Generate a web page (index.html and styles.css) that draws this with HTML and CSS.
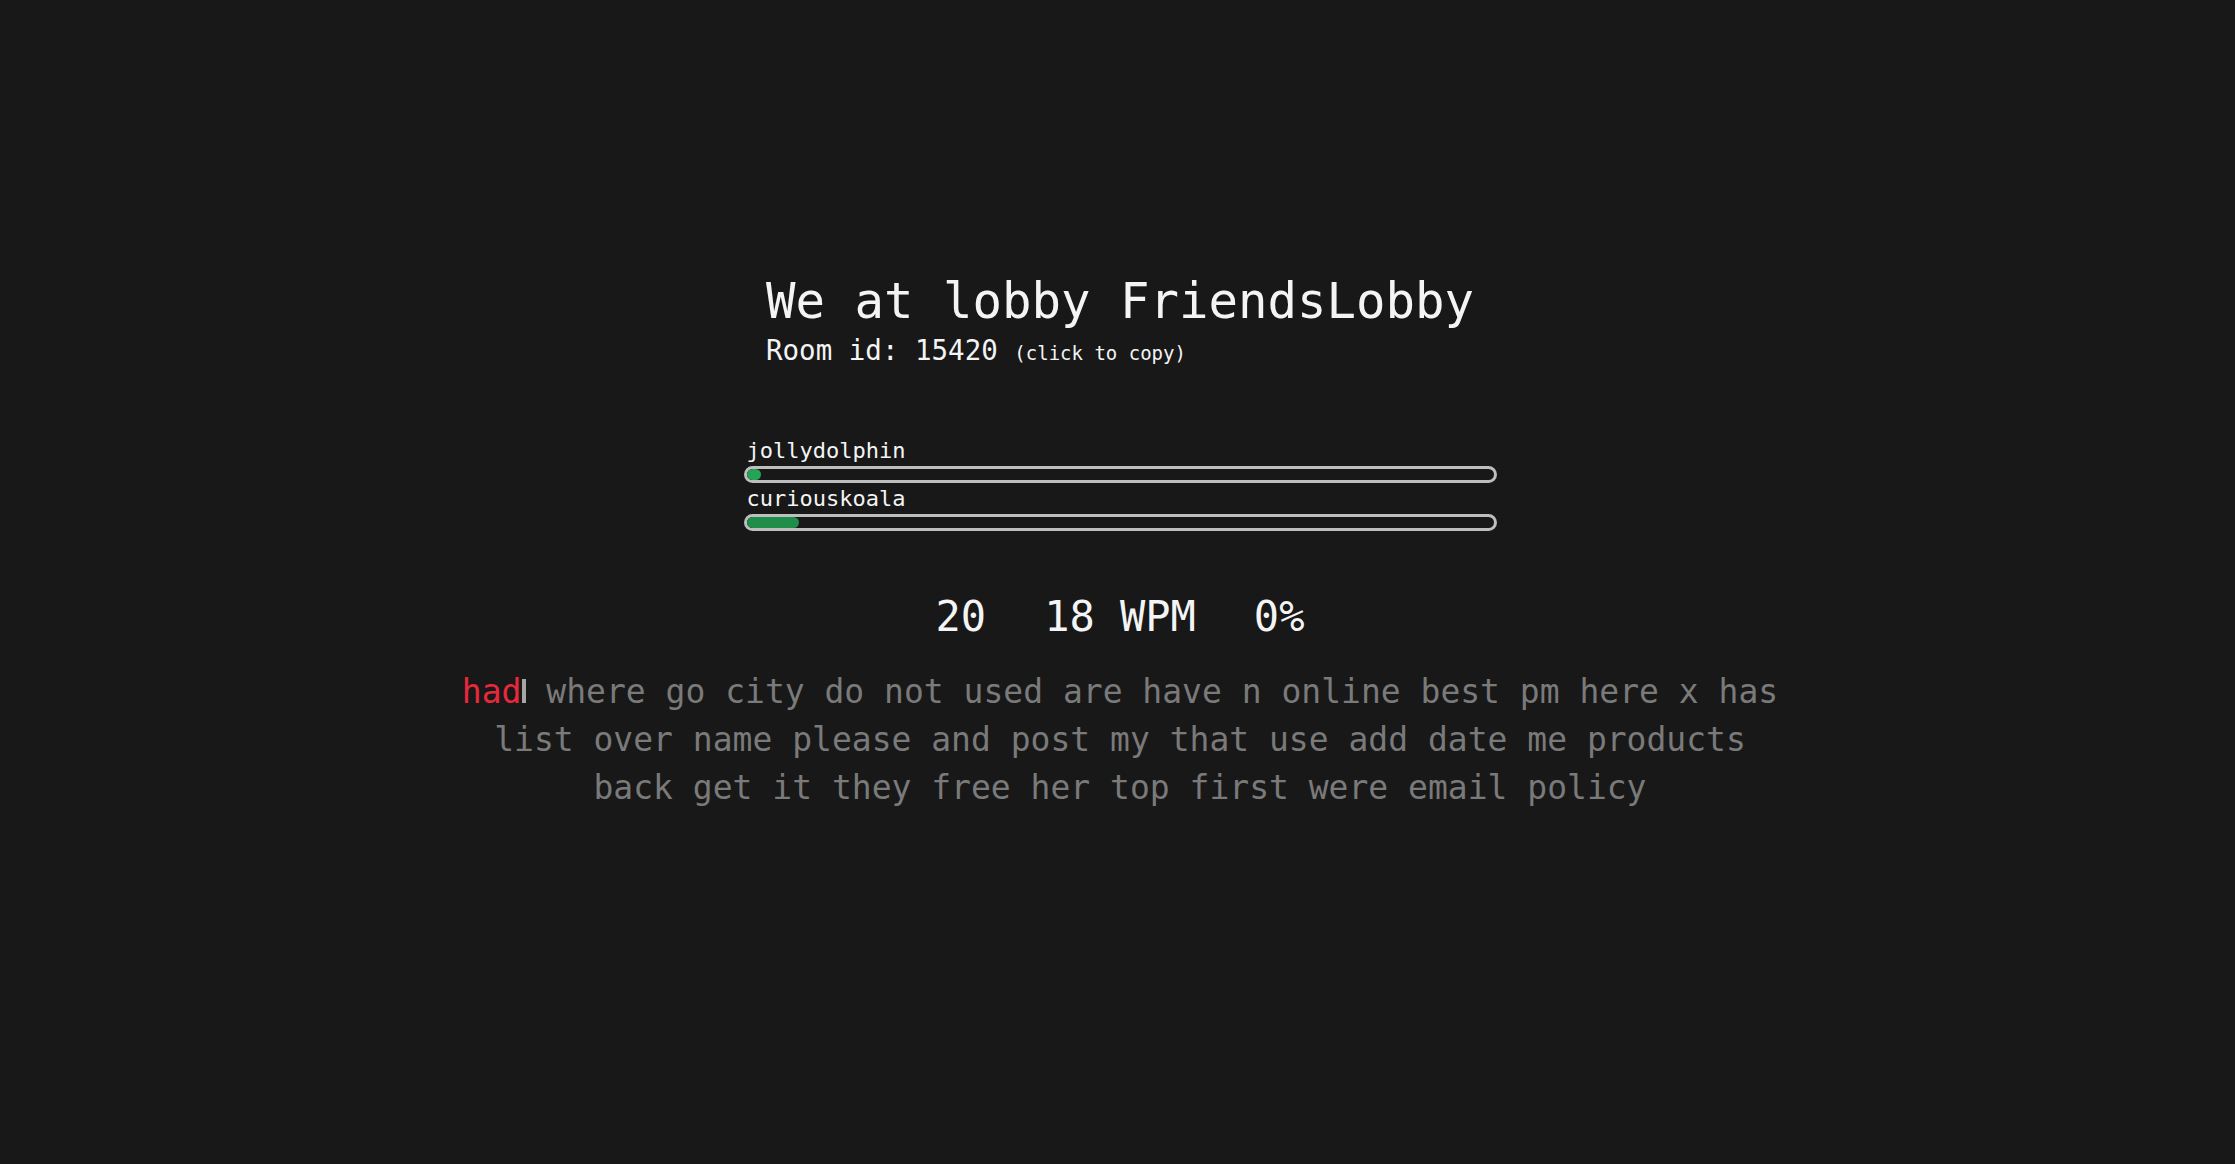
FILE: index.html
```html
<!DOCTYPE html>
<html lang="en">
<head>
<meta charset="utf-8">
<title>Lobby</title>
<link rel="stylesheet" href="styles.css">
</head>
<body>
<main class="page">
  <header class="lobby-head">
    <h1 class="lobby-title">We at lobby FriendsLobby</h1>
    <div class="room-id">Room id: 15420 <span class="copy-hint">(click to copy)</span></div>
  </header>

  <section class="players">
    <div class="player">
      <div class="player-name">jollydolphin</div>
      <div class="track"><div class="fill fill-a" style="width:2%"></div></div>
    </div>
    <div class="player">
      <div class="player-name">curiouskoala</div>
      <div class="track"><div class="fill fill-b" style="width:7%"></div></div>
    </div>
  </section>

  <div class="stats">
    <span class="stat">20</span>
    <span class="stat">18 WPM</span>
    <span class="stat">0%</span>
  </div>

  <p class="words"><span class="typed-wrong">had</span><span class="caret"></span> where go city do not used are have n online best pm here x has list over name please and post my that use add date me products back get it they free her top first were email policy</p>
</main>
</body>
</html>
```

FILE: styles.css
```css
html, body {
  margin: 0;
  padding: 0;
  background: #181818;
}

body {
  font-family: "DejaVu Sans Mono", "Liberation Mono", monospace;
  color: #f2f2f2;
  min-height: 100vh;
}

.page {
  display: flex;
  flex-direction: column;
  align-items: center;
  padding-top: 271px;
  padding-left: 5px;
}

.lobby-head {
  display: flex;
  flex-direction: column;
  align-items: flex-start;
}

.lobby-title {
  margin: 0;
  font-size: 49px;
  font-weight: normal;
  line-height: 61px;
  color: #f4f4f4;
}

.room-id {
  font-size: 27.5px;
  line-height: 36px;
  color: #f4f4f4;
}

.copy-hint {
  font-size: 19px;
}

.players {
  margin-top: 67px;
  display: flex;
  flex-direction: column;
  gap: 3px;
  width: 753px;
}

.player-name {
  font-size: 22px;
  line-height: 26px;
  margin-bottom: 2px;
  padding-left: 3px;
  color: #f4f4f4;
}

.track {
  box-sizing: border-box;
  width: 100%;
  height: 17px;
  border: 3px solid #bebebe;
  border-radius: 9px;
  overflow: hidden;
}

.fill {
  height: 100%;
  border-radius: 6px;
}

.fill-a {
  background: #24a556;
}

.fill-b {
  background: #1f8e4b;
}

.stats {
  margin-top: 61px;
  display: flex;
  gap: 58px;
  font-size: 42px;
  line-height: 50px;
  color: #f4f4f4;
}

.words {
  margin: 26px 0 0;
  width: 1330px;
  text-align: center;
  font-size: 33px;
  line-height: 48px;
  color: #7a7a7a;
}

.typed-wrong {
  color: #e8283b;
}

.caret {
  display: inline-block;
  width: 4px;
  height: 24px;
  margin-left: 1px;
  background: #a6a6a6;
}
```
